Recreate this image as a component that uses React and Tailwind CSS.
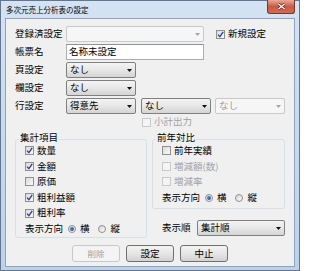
import clsx from 'clsx';

const jp = "font-['Noto_Sans_CJK_JP','Noto_Sans_CJK_SC',sans-serif]";

const Arrow = ({ disabled }) => (
  <svg width="5" height="3" viewBox="0 0 5 3" className="shrink-0">
    <polygon points="0,0 5,0 2.5,3" fill={disabled ? '#a4a4a4' : '#111'} />
  </svg>
);

const Combo = ({ value, w, disabled }) => (
  <div
    className={clsx(
      'flex h-full items-center justify-between rounded-[2px] border pl-[3px] pr-[3px]',
      disabled
        ? 'border-[#c5c9cc] bg-[#f6f6f6] text-[#9a9a9a]'
        : 'border-[#7f7f7f] bg-linear-to-b from-[#f4f4f4] via-[#e7e7e7] to-[#d4d4d4] text-black',
      w,
    )}
  >
    <span>{value}</span>
    <Arrow disabled={disabled} />
  </div>
);

const Check = ({ checked, disabled }) => (
  <span
    className={clsx(
      'flex size-[9px] shrink-0 items-center justify-center border',
      disabled
        ? 'border-[#c9c9c9] bg-[#f4f4f4]'
        : 'border-[#8e8f8f] bg-linear-to-br from-[#d9d9d9] to-[#fbfbfb]',
    )}
  >
    {checked && (
      <svg width="7" height="7" viewBox="0 0 7 7">
        <path d="M1 3.6 L2.9 5.6 L6.2 0.8" fill="none" stroke="#2b3f94" strokeWidth="1.3" />
      </svg>
    )}
  </span>
);

const Radio = ({ on }) => (
  <span className="flex size-[8px] shrink-0 items-center justify-center rounded-full border border-[#8e8f8f] bg-linear-to-br from-[#d6d6d6] to-[#fbfbfb]">
    {on && <span className="size-[4px] rounded-full bg-linear-to-br from-[#5d8fd6] to-[#1a4c9c]" />}
  </span>
);

const CheckRow = ({ label, checked, disabled }) => (
  <div className={clsx('flex h-[15.6px] items-center gap-[3px]', disabled && 'text-[#a2a2a2]')}>
    <Check checked={checked} disabled={disabled} />
    <span>{label}</span>
  </div>
);

const Direction = () => (
  <div className="flex h-[15.6px] items-center">
    <span className="w-[43px]">表示方向</span>
    <Radio on />
    <span className="ml-[4px]">横</span>
    <span className="ml-[8px]">
      <Radio />
    </span>
    <span className="ml-[5px]">縦</span>
  </div>
);

const Group = ({ title, className, children }) => (
  <div className={clsx('relative rounded-[3px] border border-[#d5dfe5] pl-[9px] pt-[3px]', className)}>
    <span className="absolute -top-[9px] left-[3px] bg-[#f0f0f0] px-[1px] leading-[12px]">{title}</span>
    {children}
  </div>
);

const Button = ({ label, disabled }) => (
  <button
    className={clsx(
      'flex h-[17px] w-[48px] items-center justify-center rounded-[3px] border',
      disabled
        ? 'border-[#c5c9cc] bg-[#f4f4f4] text-[8.5px] text-[#a0a0a0]'
        : 'border-[#707070] bg-linear-to-b from-[#f3f3f3] via-[#e6e6e6] to-[#d2d2d2] text-black',
    )}
  >
    {label}
  </button>
);

export default function App() {
  return (
    <div
      className={`${jp} flex h-[271px] w-[300px] flex-col border border-[#62778f] bg-linear-to-b from-[#d4e3f4] to-[#bdd1e9] px-[4px] pb-[3px]`}
    >
      <div className="flex h-[17px] items-start justify-between">
        <span className="mt-[4px] pl-[1px] text-[7.5px] leading-[10px] text-black">多次元売上分析表の設定</span>
        <div className="-mt-px flex h-[14px] w-[28px] items-center justify-center rounded-b-[3px] border border-t-0 border-[#7e3327] bg-linear-to-b from-[#e9a89a] via-[#c85a45] to-[#d56a51]">
          <svg width="9" height="7" viewBox="0 0 9 7">
            <path d="M1.5 1 L7.5 6 M7.5 1 L1.5 6" stroke="#5a1e14" strokeWidth="2.6" />
            <path d="M1.5 1 L7.5 6 M7.5 1 L1.5 6" stroke="#fff" strokeWidth="1.4" />
          </svg>
        </div>
      </div>

      <div className="flex flex-1 flex-col border border-[#8ea3bd] bg-[#f0f0f0] pt-[7px] text-[9.5px] leading-none text-black">
        <div className="pl-[9px]">
          <div className="flex flex-col gap-[2px]">
            <div className="flex h-[16px] items-center">
              <span className="w-[51px]">登録済設定</span>
              <Combo value="" w="w-[138px]" disabled />
              <span className="ml-[12px] flex items-center gap-[3px]">
                <Check checked />
                <span>新規設定</span>
              </span>
            </div>
            <div className="flex h-[16px] items-center">
              <span className="w-[51px]">帳票名</span>
              <div className="flex h-full w-[138px] items-center border border-[#abadb3] border-t-[#8e9197] bg-white pl-[2px]">
                名称未設定
              </div>
            </div>
            <div className="flex h-[16px] items-center">
              <span className="w-[51px]">頁設定</span>
              <Combo value="なし" w="w-[70px]" />
            </div>
            <div className="flex h-[16px] items-center">
              <span className="w-[51px]">欄設定</span>
              <Combo value="なし" w="w-[70px]" />
            </div>
            <div className="flex h-[16px] items-center">
              <span className="w-[51px]">行設定</span>
              <Combo value="得意先" w="w-[70px]" />
              <span className="ml-[5px] h-full">
                <Combo value="なし" w="w-[70px]" />
              </span>
              <span className="ml-[4px] h-full">
                <Combo value="なし" w="w-[70px]" disabled />
              </span>
            </div>
            <div className="ml-[127px] flex h-[12px] items-center gap-[3px] text-[#a2a2a2]">
              <Check disabled />
              <span>小計出力</span>
            </div>
          </div>

          <div className="mt-[11px] flex items-start gap-[5px]">
            <Group title="集計項目" className="h-[99px] w-[132px]">
              <CheckRow label="数量" checked />
              <CheckRow label="金額" checked />
              <CheckRow label="原価" />
              <CheckRow label="粗利益額" checked />
              <CheckRow label="粗利率" checked />
              <Direction />
            </Group>

            <div className="flex flex-col">
              <Group title="前年対比" className="h-[70px] w-[133px]">
                <CheckRow label="前年実績" />
                <CheckRow label="増減額(数)" disabled />
                <CheckRow label="増減率" disabled />
                <Direction />
              </Group>
              <div className="mt-[11px] flex h-[16px] items-center pl-[10px]">
                <span className="w-[35px]">表示順</span>
                <Combo value="集計順" w="w-[88px]" />
              </div>
            </div>
          </div>
        </div>

        <div className="mt-[7px] flex justify-center gap-[6px]">
          <Button label="削除" disabled />
          <Button label="設定" />
          <Button label="中止" />
        </div>
      </div>
    </div>
  );
}
